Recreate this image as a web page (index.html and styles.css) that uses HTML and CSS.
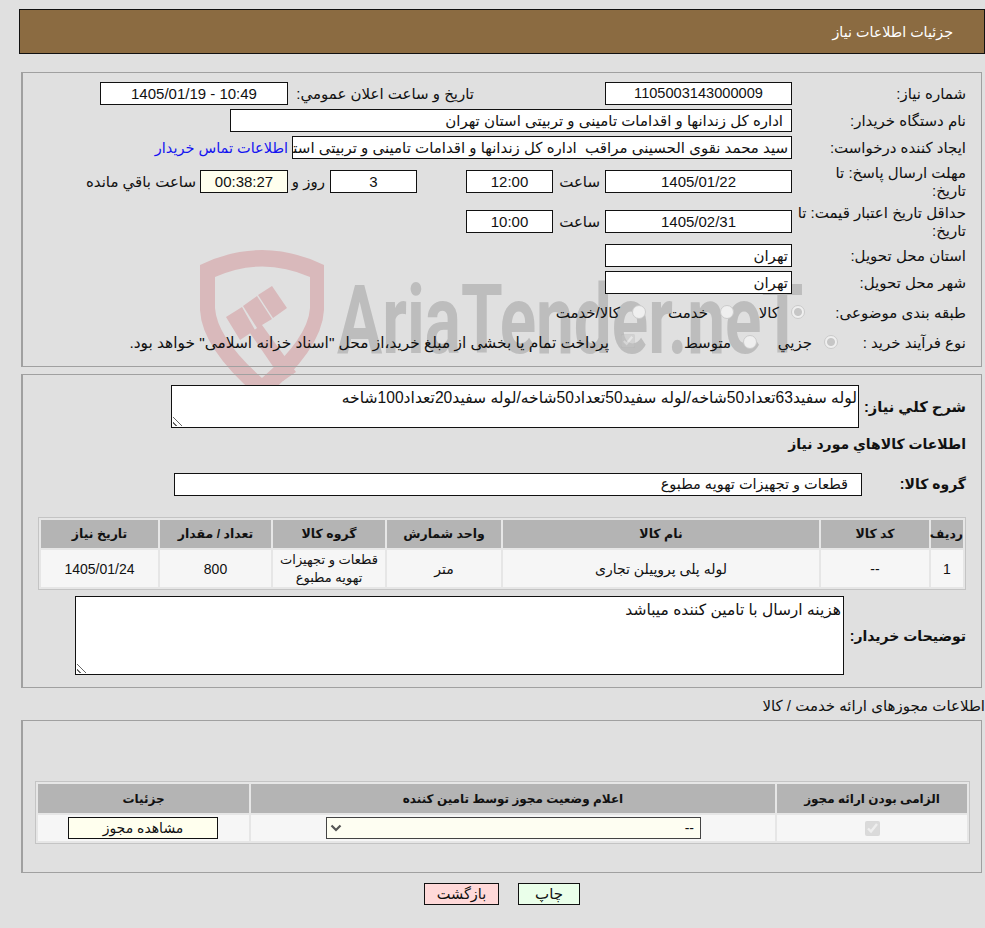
FILE: index.html
```
<!DOCTYPE html>
<html lang="fa" dir="rtl">
<head>
<meta charset="utf-8">
<title>جزئيات اطلاعات نياز</title>
<link rel="stylesheet" href="styles.css">
</head>
<body>
<div class="watermark" aria-hidden="true">
  <svg class="watermark-logo" viewBox="190 240 150 160">
    <path fill-rule="evenodd" d="M200 265 Q262 235 324 265 V310 Q322 350 262 400 Q202 350 200 310Z M215 277 V308 Q217 338 262 378 Q308 338 310 308 V277 Q262 256 215 277Z" fill="#d9b9bb"/>
    <path d="M226 317 L242 307 L255 330 L240 340Z M258 295 L272 286 L287 308 L273 318Z M243 306 L257 296 L272 319 L262 325 L296 372 L283 381 L250 333 L257 328Z" fill="#d9b9bb"/>
  </svg>
  <div class="watermark-text">AriaTender.neT</div>
</div>

<header class="title-bar">جزئيات اطلاعات نياز</header>

<section class="panel panel-main">
  <div class="row r1">
    <span class="label">شماره نياز:</span>
    <span class="box w-date center num">1105003143000009</span>
    <span class="label-inline">تاريخ و ساعت اعلان عمومي:</span>
    <span class="box w-announce center ltr">1405/01/19 - 10:49</span>
  </div>
  <div class="row r2">
    <span class="label">نام دستگاه خريدار:</span>
    <span class="box w-buyer">اداره کل زندانها و اقدامات تامینی و تربیتی استان تهران</span>
  </div>
  <div class="row r3">
    <span class="label">ايجاد كننده درخواست:</span>
    <span class="box w-creator">سید محمد نقوی الحسینی مراقب&nbsp; اداره کل زندانها و اقدامات تامینی و تربیتی استان تهران</span>
    <a class="link" href="#">اطلاعات تماس خريدار</a>
  </div>
  <div class="row r4">
    <span class="label two-line narrow">مهلت ارسال پاسخ: تا تاریخ:</span>
    <span class="box w-date center">1405/01/22</span>
    <span class="word w-hour">ساعت</span>
    <span class="box w-time center">12:00</span>
    <span class="box w-days center">3</span>
    <span class="word w-and">روز و</span>
    <span class="box w-timer center">00:38:27</span>
    <span class="word">ساعت باقي مانده</span>
  </div>
  <div class="row r5">
    <span class="label two-line">حداقل تاريخ اعتبار قيمت: تا تاريخ:</span>
    <span class="box w-date center">1405/02/31</span>
    <span class="word w-hour">ساعت</span>
    <span class="box w-time center">10:00</span>
  </div>
  <div class="row r6">
    <span class="label">استان محل تحویل:</span>
    <span class="box w-date city">تهران</span>
  </div>
  <div class="row r7">
    <span class="label">شهر محل تحویل:</span>
    <span class="box w-date city">تهران</span>
  </div>
  <div class="row r8">
    <span class="label">طبقه بندی موضوعی:</span>
    <label class="opt o1"><input type="radio" name="a" checked disabled><span>کالا</span></label>
    <label class="opt o2"><input type="radio" name="a" disabled><span>خدمت</span></label>
    <label class="opt o3"><input type="radio" name="a" disabled><span>کالا/خدمت</span></label>
  </div>
  <div class="row r9">
    <span class="label">نوع فرآیند خرید :</span>
    <label class="opt o4"><input type="radio" name="b" checked disabled><span>جزيي</span></label>
    <label class="opt o5"><input type="radio" name="b" disabled><span>متوسط</span></label>
    <label class="opt o6"><input type="checkbox" checked disabled><span>پرداخت تمام یا بخشی از مبلغ خرید،از محل "اسناد خزانه اسلامی" خواهد بود.</span></label>
  </div>
</section>

<section class="panel panel-goods">
  <div class="desc-row">
    <span class="label-b">شرح كلي نياز:</span>
    <div class="area area-desc">لوله سفید63تعداد50شاخه/لوله سفید50تعداد50شاخه/لوله سفید20تعداد100شاخه<i class="grip"></i></div>
  </div>
  <h2 class="label-b heading">اطلاعات كالاهاي مورد نياز</h2>
  <div class="group-row">
    <span class="label-b">گروه کالا:</span>
    <span class="box w-group">قطعات و تجهیزات تهویه مطبوع</span>
  </div>
  <table class="grid goods">
    <colgroup><col class="c1"><col class="c2"><col class="c3"><col class="c4"><col class="c5"><col class="c6"><col class="c7"></colgroup>
    <thead><tr><th>رديف</th><th>کد کالا</th><th>نام کالا</th><th>واحد شمارش</th><th>گروه کالا</th><th>تعداد / مقدار</th><th>تاریخ نیاز</th></tr></thead>
    <tbody><tr><td>1</td><td>--</td><td>لوله پلی پروپیلن تجاری</td><td>متر</td><td class="small">قطعات و تجهیزات تهویه مطبوع</td><td>800</td><td>1405/01/24</td></tr></tbody>
  </table>
  <div class="note-row">
    <span class="label-b">توضیحات خریدار:</span>
    <div class="area area-note">هزینه ارسال با تامین کننده میباشد<i class="grip"></i></div>
  </div>
</section>

<div class="perm-title">اطلاعات مجوزهای ارائه خدمت / کالا</div>
<section class="panel panel-perm">
  <table class="grid perm">
    <colgroup><col class="p1"><col class="p2"><col class="p3"></colgroup>
    <thead><tr><th>الزامی بودن ارائه مجوز</th><th>اعلام وضعیت مجوز توسط تامین کننده</th><th>جزئیات</th></tr></thead>
    <tbody><tr>
      <td><input class="perm-check" type="checkbox" checked disabled></td>
      <td><div class="select"><span>--</span><svg viewBox="0 0 12 8" class="chev" aria-hidden="true"><path d="M1.5 1.5 L6 6 L10.5 1.5" fill="none" stroke="#555" stroke-width="2.2"/></svg></div></td>
      <td><button class="btn view" type="button">مشاهده مجوز</button></td>
    </tr></tbody>
  </table>
</section>

<div class="actions">
  <button class="btn print" type="button">چاپ</button>
  <button class="btn back" type="button">بازگشت</button>
</div>
</body>
</html>
```
FILE: styles.css
```
* { box-sizing: border-box; }
html, body { margin: 0; padding: 0; }
body {
  width: 985px;
  height: 928px;
  overflow: hidden;
  position: relative;
  background: #e0e0e0;
  color: #111;
  font: 15px/18px "Liberation Sans", "DejaVu Sans", sans-serif;
  padding-top: 9px;
}
.watermark { position: absolute; left: 0; top: 0; width: 985px; height: 400px; overflow: hidden; direction: ltr; }
.watermark-logo { position: absolute; left: 190px; top: 240px; width: 150px; height: 160px; }
.watermark-text {
  position: absolute;
  left: 337px;
  top: 265px;
  font: bold 97px/110px "Roboto", "Liberation Sans", sans-serif;
  color: #bdbdbd;
  white-space: nowrap;
  transform: scaleX(.695);
  transform-origin: left top;
}
.title-bar {
  position: relative;
  height: 45px;
  margin-left: 19px;
  width: 966px;
  background: #8b6b41;
  border: 1px solid #111;
  color: #fff;
  font-size: 14.3px;
  padding: 13px 31px 0 0;
}
.panel {
  width: 961px;
  margin-right: 3px;
  border: 1px solid #a0a0a0;
  border-left-width: 2px;
  position: relative;
}
.panel-main { margin-top: 18px; height: 295px; }
.row { display: flex; align-items: flex-start; position: absolute; right: 0; left: 0; }
.r1 { top: 9px; } .r2 { top: 36px; } .r3 { top: 63px; } .r4 { top: 97px; }
.r5 { top: 137px; } .r6 { top: 171px; } .r7 { top: 198px; } .r8 { top: 228px; } .r9 { top: 258px; }
.label { width: 189px; padding: 3px 15px 0 5px; flex: none; }
.two-line { margin-top: -6px; padding-top: 0; height: 36px; }
.narrow { padding-left: 30px; }
.r3 .label { white-space: nowrap; }
.box {
  display: block;
  height: 23px;
  border: 1px solid #111;
  background: #fff;
  line-height: 21px;
  flex: none;
  position: relative;
  z-index: 1;
}
.center { text-align: center; }
.ltr { direction: ltr; }
.num { font-size: 14.6px; }
.w-date { width: 187px; }
.w-announce { width: 188px; }
.w-buyer { width: 562px; padding-right: 8px; }
.w-creator { width: 500px; padding: 0 3px; overflow: hidden; white-space: nowrap; }
.w-time { width: 87px; }
.w-days { width: 87px; margin-right: 49px; }
.w-timer { width: 88px; background: #ffffee; }
.w-group { width: 688px; padding-right: 13px; font-size: 14.5px; }
.city { padding-right: 3px; }
.label-inline { padding: 3px 131px 0 0; width: 317px; flex: none; white-space: nowrap; }
.link { color: #1414f0; text-decoration: none; padding: 3px 4px 0 0; white-space: nowrap; font-size: 14.5px; }
.word { padding: 3px 4px 0; flex: none; white-space: nowrap; }
.w-hour { width: 52px; padding-right: 5px; }
.w-and { width: 42px; padding-right: 5px; }
.opt { display: flex; align-items: flex-start; gap: 13px; flex: none; white-space: nowrap; position: relative; }
.opt input { margin: 4px 0 0; width: 14px; height: 14px; flex: none; appearance: none; }
.opt input + span { margin-right: -1px; }
.opt input[type="radio"] { border: 1px solid #cbcbcb; border-radius: 50%; background: #efefef; }
.opt input[type="radio"]:checked { background: radial-gradient(circle, #c6c6c6 0 3.5px, #efefef 4.5px); }
.opt input[type="checkbox"] {
  appearance: auto; margin-top: 3px; opacity: .6;
}
.opt span { padding-top: 3px; }
.o1 { margin-right: -13px; width: 71px; }
.o2 { width: 88px; }
.o3 { width: 120px; }
.o4 { margin-right: -46px; width: 81px; }
.o5 { width: 122px; }
.o6 span { font-size: 15.4px; }
.panel-goods { margin-top: 7px; height: 314px; }
.desc-row { display: flex; padding-top: 10px; }
.label-b { font-weight: bold; font-size: 14px; white-space: nowrap; }
.desc-row .label-b { width: 122px; padding: 13px 15px 0 0; flex: none; font-size: 14.7px; }
.area { border: 1px solid #111; background: #fff; position: relative; flex: none; padding: 3px 1px; }
.area-desc { width: 688px; height: 43px; font-size: 15.6px; }
.area-note { width: 769px; height: 79px; padding: 4px 2px; font-size: 15.5px; }
.grip {
  position: absolute; left: 1px; bottom: 1px; width: 10px; height: 10px;
  background: repeating-linear-gradient(45deg, transparent 0 2px, #666 2px 3px, transparent 3px 4px);
  clip-path: polygon(0 0, 100% 100%, 0 100%);
}
.heading { margin: 5px 0 0; padding-right: 15px; line-height: 22px; height: 22px; }
.group-row { display: flex; margin-top: 18px; height: 23px; }
.group-row .label-b { width: 119px; padding: 2px 15px 0 0; flex: none; }
.grid {
  border: 1px solid #c4c4c4;
  border-spacing: 2px;
  border-collapse: separate;
  background: #e6e6e6;
  table-layout: fixed;
  position: absolute;
}
.grid th { background: #b4b4b4; font-size: 12.5px; font-weight: bold; padding: 0; }
.grid td { background: #f6f6f6; text-align: center; padding: 0; font-size: 14px; }
.grid td.small { font-size: 13px; }
.goods { right: 15px; top: 142px; width: 928px; height: 73px; }
.goods thead tr { height: 28px; }
.goods tbody tr { height: 37px; }
.c1 { width: 32px; } .c2 { width: 108px; } .c3 { width: 316px; } .c4 { width: 114px; }
.c5 { width: 112px; } .c6 { width: 111px; } .c7 { width: 117px; }
.note-row { position: absolute; right: 0; top: 221px; display: flex; }
.note-row .label-b { width: 137px; padding: 31px 15px 0 0; flex: none; }
.perm-title { margin-top: 9px; height: 23px; line-height: 18px; }
.panel-perm { height: 153px; }
.perm { right: 11px; top: 60px; width: 935px; height: 63px; }
.perm thead tr { height: 29px; }
.perm tbody tr { height: 26px; }
.grid.perm th { font-size: 12px; }
.p1 { width: 190px; } .p2 { width: 524px; } .p3 { width: 211px; }
.perm-check { display: block; margin: 0 auto; width: 15px; height: 15px; opacity: .7; }
.select {
  width: 375px; height: 22px; margin-right: 74px;
  border: 1px solid #444; background: #fefef2;
  display: flex; justify-content: space-between; align-items: center;
  padding: 0 6px 0 3px;
}
.chev { width: 12px; height: 8px; }
.btn { font: inherit; color: #111; height: 22px; border: 1px solid #111; padding: 0; border-radius: 0; }
.view { width: 150px; background: #ffffee; display: block; margin-right: 31px; }
.actions { display: flex; justify-content: center; gap: 19px; margin-top: 10px; padding-left: 19px; }
.print { width: 62px; background: #eaffea; }
.back { width: 75px; background: #ffd9d9; font-size: 14.5px; }
```
